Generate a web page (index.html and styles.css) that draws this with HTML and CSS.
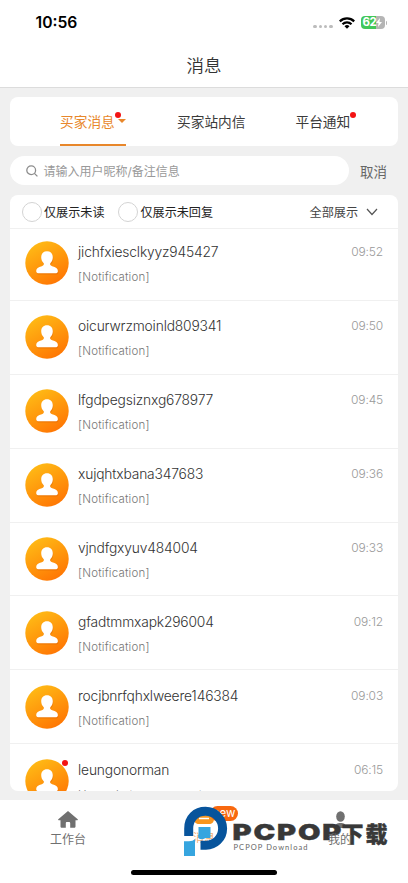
FILE: index.html
```html
<!DOCTYPE html>
<html lang="zh-CN">
<head>
<meta charset="utf-8">
<title>消息</title>
<link rel="stylesheet" href="styles.css">
</head>
<body>
<svg width="0" height="0" class="defs">
  <defs>
    <linearGradient id="sun" x1=".2" y1="0" x2=".75" y2="1"><stop offset="0" stop-color="#ffbd16"/><stop offset="1" stop-color="#ff7403"/></linearGradient>
    <symbol id="avatar" viewBox="0 0 44 44">
      <circle cx="22" cy="22" r="21.7" fill="url(#sun)"/>
      <path d="M22 10.8c-3.700 0-5.800 2.500-5.800 6 0 2.600 1 4.600 2.500 5.900.5 1.500-.2 2.400-1.900 3-3.500 1-5.600 2.200-5.600 4.700 0 1.700 1 2.400 2.700 2.400h16.300c1.800 0 2.700-.7 2.700-2.400 0-2.500-2.200-3.700-5.700-4.700-1.700-.6-2.400-1.500-1.900-3 1.500-1.300 2.500-3.300 2.500-5.900 0-3.500-2.100-6-5.800-6z" fill="#d96200" opacity=".45" transform="translate(.5 .8)"/>
      <path d="M22 10.300c-3.700 0-5.800 2.500-5.800 6 0 2.600 1 4.600 2.500 5.900.5 1.500-.2 2.400-1.900 3-3.500 1-5.600 2.200-5.600 4.700 0 1.700 1 2.400 2.700 2.400h16.300c1.800 0 2.700-.7 2.700-2.400 0-2.500-2.200-3.700-5.700-4.700-1.700-.6-2.400-1.500-1.900-3 1.500-1.300 2.500-3.300 2.500-5.900 0-3.500-2.100-6-5.800-6z" fill="#fff"/>
    </symbol>
  </defs>
</svg>
<div class="phone">
  <header class="top">
    <div class="status">
      <span class="clock">10:56</span>
      <span class="signal"><i></i><i></i><i></i><i></i></span>
      <svg class="wifi" width="16" height="12" viewBox="0 0 16 12"><g fill="none" stroke="#000" stroke-width="2.200"><path d="M.8 4.400a10.300 10.300 0 0 1 14.400 0"/><path d="M3.500 7.200a6.400 6.400 0 0 1 9 0"/></g><path d="M5.500 9.200a3.600 3.600 0 0 1 5 0L8 11.800z"/></svg>
      <span class="battery">62<svg width="6" height="9" viewBox="0 0 6 9"><path d="M4 0L0 5h2.500L2 9l4-5H3.500z" fill="#fff"/></svg></span><i class="cap"></i>
    </div>
    <h1>消息</h1>
  </header>
  <main>
    <nav class="tabs">
      <a class="tab active">买家消息<i class="caret"></i><i class="dot"></i></a>
      <a class="tab inbox">买家站内信</a>
      <a class="tab notice">平台通知<i class="dot"></i></a>
    </nav>
    <div class="search">
      <div class="field"><svg width="12" height="12" viewBox="0 0 12 12" fill="none" stroke="#8c8c8c" stroke-width="1.300"><circle cx="5.200" cy="5.200" r="4.400"/><path d="M8.400 8.400l3 3"/></svg><span>请输入用户昵称/备注信息</span></div>
      <span class="cancel">取消</span>
    </div>
    <section class="list">
      <div class="filters">
        <i class="radio"></i><span>仅展示未读</span>
        <i class="radio second"></i><span>仅展示未回复</span>
        <span class="all">全部展示</span>
        <svg width="12" height="8" viewBox="0 0 12 8" fill="none" stroke="#555" stroke-width="1.200"><path d="M1 1l5 5.500L11 1"/></svg>
      </div>
      <div class="row"><svg class="avatar"><use href="#avatar"/></svg><div class="body"><b>jichfxiesclkyyz945427</b><p>[Notification]</p></div><time>09:52</time></div>
      <div class="row"><svg class="avatar"><use href="#avatar"/></svg><div class="body"><b>oicurwrzmoinld809341</b><p>[Notification]</p></div><time>09:50</time></div>
      <div class="row"><svg class="avatar"><use href="#avatar"/></svg><div class="body"><b>lfgdpegsiznxg678977</b><p>[Notification]</p></div><time>09:45</time></div>
      <div class="row"><svg class="avatar"><use href="#avatar"/></svg><div class="body"><b>xujqhtxbana347683</b><p>[Notification]</p></div><time>09:36</time></div>
      <div class="row"><svg class="avatar"><use href="#avatar"/></svg><div class="body"><b>vjndfgxyuv484004</b><p>[Notification]</p></div><time>09:33</time></div>
      <div class="row"><svg class="avatar"><use href="#avatar"/></svg><div class="body"><b>gfadtmmxapk296004</b><p>[Notification]</p></div><time>09:12</time></div>
      <div class="row"><svg class="avatar"><use href="#avatar"/></svg><div class="body"><b>rocjbnrfqhxlweere146384</b><p>[Notification]</p></div><time>09:03</time></div>
      <div class="row"><svg class="avatar"><use href="#avatar"/></svg><i class="dot unread"></i><div class="body"><b>leungonorman</b><p>Hey, what are you up to</p></div><time>06:15</time></div>
    </section>
  </main>
  <footer class="bar">
    <a class="item"><svg width="20" height="17" viewBox="0 0 20 17"><path d="M10 0L.3 8.300c-.4.4-.2.9.3.9H2.500v6.200c0 .9.6 1.400 1.400 1.400h3.900v-4.600c0-.7.5-1.200 1.200-1.200h2c.7 0 1.200.5 1.200 1.200v4.600h3.900c.8 0 1.400-.5 1.400-1.400V9.200h1.900c.5 0 .7-.5.3-.9z" fill="#707070"/></svg><span>工作台</span></a>
    <a class="item current"><svg width="20" height="17" viewBox="0 0 20 17"><path d="M0 9C0 3 4 0 10 0s10 3 10 9c0 3-2 5-5 5H5c-3 0-5-2-5-5z" fill="#f7951d"/><path d="M6 4.500h8M5 8.500h10" stroke="#fff" stroke-width="1.500"/></svg><span>消息</span></a>
    <a class="item"><svg width="20" height="17" viewBox="0 0 20 17"><ellipse cx="10.500" cy="5.500" rx="4.300" ry="5.300" fill="#707070"/><path d="M5 17c0-4 2-5 5.500-5s5.500 1 5.500 5z" fill="#707070"/></svg><span class="mine">我的</span></a>
    <span class="new">new</span>
    <div class="mark">
      <svg width="46" height="52" viewBox="0 0 46 52"><path d="M4.700 30V22.500C4.700 12 12 5.300 21.500 5.300S38.600 13 38.600 22.500 31 39.200 22 39.200H16.500" fill="none" stroke="#07549c" stroke-width="9"/><path d="M14.500 21H26.500V32H22C16 34.500 13 33 14.500 28zM0 35.300h5q4 0 6-2.300V50H0z" fill="#36a5df"/></svg>
      <svg class="wordmark" width="160" height="36" viewBox="0 0 160 36"><g fill="#383838" stroke="#383838" font-weight="900"><text transform="translate(-.5 18.300) scale(1.320 1)" x="0" y="0" font-size="22" stroke-width=".4" font-family="Inter, sans-serif" textLength="82.500" lengthAdjust="spacing">PCPOP</text><text x="108.500" y="20" font-size="22" stroke-width=".4" font-family="Noto Sans CJK SC, sans-serif" textLength="46" lengthAdjust="spacing">下载</text></g><text x=".5" y="28" font-size="7.500" fill="#666" font-family="Lato, sans-serif" textLength="74">PCPOP Download</text></svg>
    </div>
    <i class="home"></i>
  </footer>
</div>
</body>
</html>
```

FILE: styles.css
```css
*{box-sizing:border-box}
body{margin:0;font-family:Inter,"Noto Sans CJK SC",sans-serif;color:#3b3b3b}
i,b{font-style:normal;font-weight:400}
.defs{position:absolute}
svg{display:block;flex:none}
.phone{width:408px;height:883px;display:flex;flex-direction:column;background:#f0f0f0;overflow:hidden}
.top{height:88px;background:#fff;border-bottom:1px solid #dcdcdc;flex:none}
.status{height:45px;display:flex;align-items:center;padding:0 21px 0 35.500px}
.clock{font-size:15.700px;font-weight:600;color:#000;margin-right:auto}
.signal{display:flex;gap:2px;margin:8px 6px 0 0}
.signal i{width:3.300px;height:3.300px;border-radius:50%;background:#bcbcbc}
.wifi{margin-right:6px}
.battery{width:24px;height:13px;border-radius:4px;background:linear-gradient(90deg,#42c758 63%,#b5b5b5 63%);color:#fff;font:700 11.500px/13px Inter,sans-serif;padding-left:2px;display:flex;align-items:center;letter-spacing:-.4px}
.cap{width:1.500px;height:4px;border-radius:0 2px 2px 0;background:#b5b5b5;margin-left:1px}
h1{font-size:17.500px;line-height:42px;font-weight:350;text-align:center;margin:0;color:#333}
main{padding:9px 10px 0;height:712px;flex:none}
.tabs{height:49px;background:#fff;border-radius:8px;display:flex;padding-left:50px}
.tab{font-size:13.700px;line-height:50px;height:49px;position:relative;white-space:nowrap;color:#3b3b3b}
.active{color:#e8872b;width:66px;border-bottom:2px solid #e8872b;display:flex;gap:3px}
.caret{border:4px solid transparent;border-top-color:#e8872b;border-bottom:0;margin-top:22px}
.inbox{margin-left:51px}
.notice{margin-left:50px}
.dot{position:absolute;width:6px;height:6px;border-radius:50%;background:#f31313;top:15px;right:-6px}
.active .dot{right:5px}
.search{display:flex;margin-top:10px;height:29px;align-items:center}
.field{width:339px;height:29px;border-radius:15px;background:#fff;display:flex;align-items:center;gap:5.500px;padding-left:16px;font-size:12px;color:#999}
.cancel{margin-left:11px;font-size:13.500px;color:#666}
.list{margin-top:10px;height:596px;background:#fff;border-radius:8px;overflow:hidden}
.filters{height:34px;border-bottom:1px solid #f0f0f0;display:flex;align-items:center;padding:0 20px 0 12px;font-size:12.100px;color:#222}
.radio{width:20px;height:20px;border:1px solid #d3d3d3;border-radius:50%;margin-right:2px}
.second{margin-left:14px}
.all{margin:0 8px 0 auto;color:#444}
.row{height:73.860px;border-bottom:1px solid #f0f0f0;display:flex;padding:14.400px 15px 0 14.500px;position:relative}
.filters+.row{height:72px;padding-top:12.400px}
.avatar{width:44px;height:44px}
.body{margin-left:9.500px;flex:1}
b{display:block;font-size:13.800px;letter-spacing:-.16px;line-height:22px;font-weight:350;color:#333}
p{font-size:11.500px;letter-spacing:.2px;line-height:16px;margin:6px 0 0;font-weight:350;color:#777}
time{font-size:12px;letter-spacing:-.15px;line-height:22px;font-weight:350;color:#999}
.unread{top:16px;left:52px;right:auto}
.bar{height:83px;background:#fff;position:relative;display:flex}
.item{flex:1;display:flex;flex-direction:column;align-items:center;padding-top:11px;font-size:12px;line-height:17px;color:#707070}
.item span{margin-top:3px}
.item .mine{position:relative;z-index:2}
.current{color:#f08b35}
.current svg{margin-top:-1px}
.current span{font-size:11px;opacity:.7}
.new{position:absolute;left:210px;top:6px;width:28px;height:15px;border-radius:8px;background:#f8680f;color:#fff;font-size:11.500px;line-height:14px;text-align:center}
.mark{position:absolute;left:184px;top:6px;display:flex}
.wordmark{margin:16px 0 0 3px}
.home{position:absolute;left:131px;top:70px;width:146px;height:5px;border-radius:3px;background:#000}
```
